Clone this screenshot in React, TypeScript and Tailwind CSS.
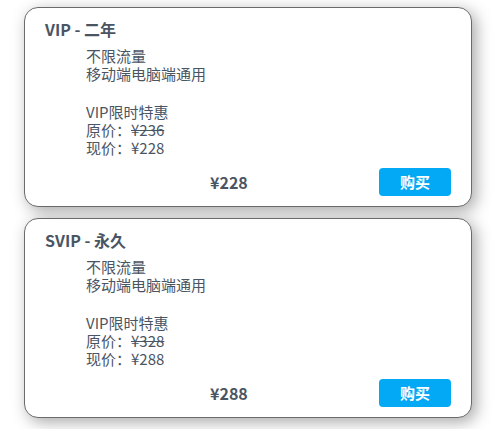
const plans = [
  { title: 'VIP - 二年', original: '¥236', price: '¥228' },
  { title: 'SVIP - 永久', original: '¥328', price: '¥288' },
];

function PlanCard({ title, original, price }: { title: string; original: string; price: string }) {
  return (
    <div className="w-[448px] h-[200px] rounded-[14px] border border-[#6b6b6b] bg-white shadow-[4px_4px_16px_rgba(0,0,0,0.35)] flex flex-col pl-5 pr-5 pt-[9px] pb-[10px]">
      <h2 className="text-[16px] leading-6 font-bold text-[#4a5563]">{title}</h2>
      <div className="mt-[6px] pl-[41px] text-[15px] leading-[18px] text-[#4a5563]">
        <p>不限流量</p>
        <p>移动端电脑端通用</p>
        <p className="mt-[20px]">VIP限时特惠</p>
        <p>
          原价：<span className="line-through">{original}</span>
        </p>
        <p>现价：{price}</p>
      </div>
      <div className="mt-auto flex items-center">
        <span className="ml-[165px] text-[16px] font-bold text-[#4a5563]">{price}</span>
        <button className="ml-auto w-[72px] h-[28px] rounded-[4px] bg-[#03a9f4] text-white text-[15px] font-bold">
          购买
        </button>
      </div>
    </div>
  );
}

export default function App() {
  return (
    <div
      className="w-[494px] h-[429px] bg-white pl-[24px] pt-[7px] flex flex-col gap-[11px]"
      style={{ fontFamily: '"Noto Sans CJK SC", "Noto Sans", sans-serif' }}
    >
      {plans.map((p) => (
        <PlanCard key={p.title} {...p} />
      ))}
    </div>
  );
}
